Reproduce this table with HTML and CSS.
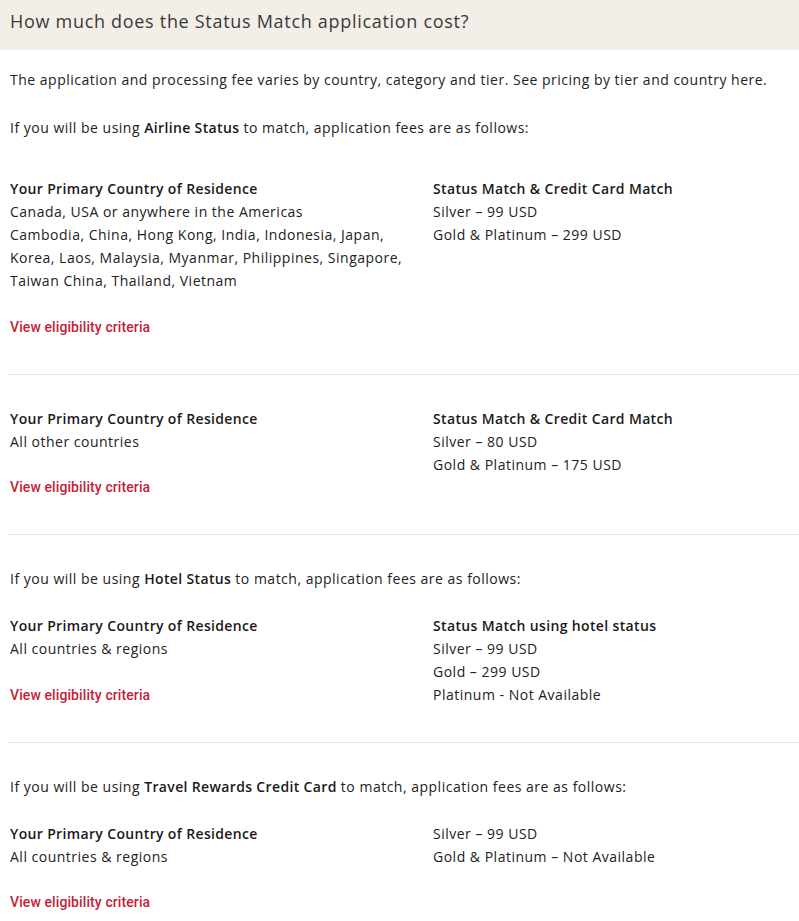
FILE: index.html
```html
<!DOCTYPE html>
<html lang="en">
<head>
<meta charset="utf-8">
<title>Status Match cost</title>
<link rel="stylesheet" href="styles.css">
</head>
<body>
<div class="faq">
  <h2 class="faq-title">How much does the Status Match application cost?</h2>
  <div class="faq-body">
    <p class="lead">The application and processing fee varies by country, category and tier. See pricing by tier and country here.</p>
    <p class="intro intro-first">If you will be using <b>Airline Status</b> to match, application fees are as follows:</p>

    <div class="fee-row">
      <div class="col">
        <div class="col-head">Your Primary Country of Residence</div>
        <div>Canada, USA or anywhere in the Americas</div>
        <div>Cambodia, China, Hong Kong, India, Indonesia, Japan, Korea, Laos, Malaysia, Myanmar, Philippines, Singapore, Taiwan China, Thailand, Vietnam</div>
        <a class="link" href="#">View eligibility criteria</a>
      </div>
      <div class="col">
        <div class="col-head">Status Match &amp; Credit Card Match</div>
        <div>Silver – 99 USD</div>
        <div>Gold &amp; Platinum – 299 USD</div>
      </div>
    </div>
    <hr class="divider">

    <div class="fee-row">
      <div class="col">
        <div class="col-head">Your Primary Country of Residence</div>
        <div>All other countries</div>
        <a class="link" href="#">View eligibility criteria</a>
      </div>
      <div class="col">
        <div class="col-head">Status Match &amp; Credit Card Match</div>
        <div>Silver – 80 USD</div>
        <div>Gold &amp; Platinum – 175 USD</div>
      </div>
    </div>
    <hr class="divider">

    <p class="intro">If you will be using <b>Hotel Status</b> to match, application fees are as follows:</p>
    <div class="fee-row">
      <div class="col">
        <div class="col-head">Your Primary Country of Residence</div>
        <div>All countries &amp; regions</div>
        <a class="link" href="#">View eligibility criteria</a>
      </div>
      <div class="col">
        <div class="col-head">Status Match using hotel status</div>
        <div>Silver – 99 USD</div>
        <div>Gold – 299 USD</div>
        <div>Platinum - Not Available</div>
      </div>
    </div>
    <hr class="divider">

    <p class="intro">If you will be using <b>Travel Rewards Credit Card</b> to match, application fees are as follows:</p>
    <div class="fee-row">
      <div class="col">
        <div class="col-head">Your Primary Country of Residence</div>
        <div>All countries &amp; regions</div>
        <a class="link" href="#">View eligibility criteria</a>
      </div>
      <div class="col">
        <div>Silver – 99 USD</div>
        <div>Gold &amp; Platinum – Not Available</div>
      </div>
    </div>
  </div>
</div>
</body>
</html>
```
FILE: styles.css
```css
html, body {
  margin: 0;
  padding: 0;
  background: #ffffff;
}
body {
  font-family: "Open Sans", "Noto Sans", sans-serif;
  font-size: 14px;
  line-height: 23px;
  letter-spacing: 0.5px;
  color: #222222;
}
.faq-title {
  margin: 0;
  height: 50px;
  box-sizing: border-box;
  padding: 8px 10px 0;
  background: #f3efe8;
  font-size: 18px;
  font-weight: 400;
  line-height: 26px;
  letter-spacing: 0.7px;
  color: #3a3a3a;
}
.faq-body {
  padding: 18px 0 0 10px;
}
.lead {
  margin: 0 0 25px;
}
.intro {
  margin: 0 0 24px;
}
.intro-first {
  margin-bottom: 38px;
}
.intro b, .col-head {
  font-weight: 600;
  letter-spacing: 0.35px;
  color: #1a1a1a;
}
.fee-row {
  display: grid;
  grid-template-columns: 423px 1fr;
}
.col {
  display: flex;
  flex-direction: column;
  align-items: flex-start;
}
.link {
  margin-top: 23.5px;
  font-family: Roboto, "Liberation Sans", sans-serif;
  font-weight: 500;
  font-size: 14px;
  line-height: 23px;
  letter-spacing: 0.1px;
  color: #c41e3a;
  text-decoration: none;
}
.divider {
  border: 0;
  border-top: 1px solid #e5e5e5;
  margin: 35px 0 32px -2px;
}
```
